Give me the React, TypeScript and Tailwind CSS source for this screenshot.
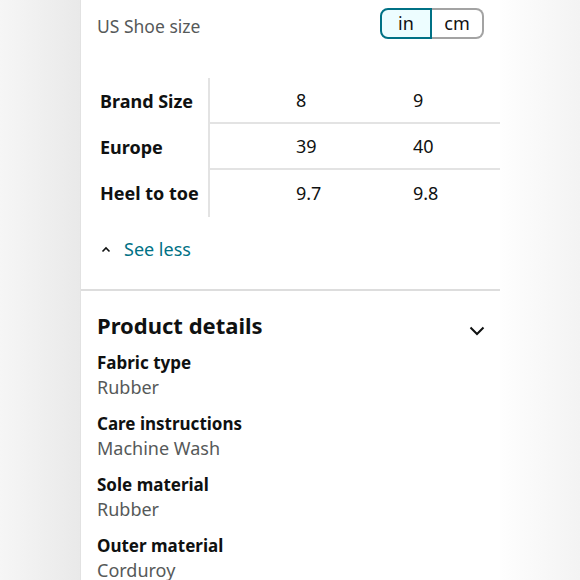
import React from 'react';

const sizeRows = [
  { label: 'Brand Size', a: '8', b: '9' },
  { label: 'Europe', a: '39', b: '40' },
  { label: 'Heel to toe', a: '9.7', b: '9.8' },
];

const details = [
  { label: 'Fabric type', value: 'Rubber' },
  { label: 'Care instructions', value: 'Machine Wash' },
  { label: 'Sole material', value: 'Rubber' },
  { label: 'Outer material', value: 'Corduroy' },
];

export default function App() {
  return (
    <div
      className="flex w-[580px] h-[580px] overflow-hidden bg-white"
      style={{ fontFamily: '"Noto Sans", "Open Sans", sans-serif' }}
    >
      {/* Left gutter */}
      <div className="w-[81px] shrink-0 bg-gradient-to-r from-[#f6f6f6] to-[#e9e9e9] border-r border-[#e2e2e2]" />

      {/* Panel */}
      <div className="w-[419px] shrink-0 bg-white">
        {/* Unit header */}
        <div className="flex items-center justify-between pl-4 pr-4 pt-2 h-[47px]">
          <span className="text-[17.5px] text-[#565959] -mt-[2px]">US Shoe size</span>
          <div className="flex h-[31px] text-[18px] text-[#0f1111] self-start">
            <div className="w-[52px] flex items-center justify-center rounded-l-[8px] border-2 border-[#007185] bg-[#edfdff]">
              in
            </div>
            <div className="w-[52px] flex items-center justify-center rounded-r-[8px] border-2 border-l-0 border-[#a3a3a3] bg-white">
              cm
            </div>
          </div>
        </div>

        {/* Size table */}
        <div className="ml-4 mt-[31px] flex">
          <div className="w-[113px] border-r-2 border-[#e3e3e3]">
            {sizeRows.map((r, i) => (
              <div
                key={r.label}
                className={`${i === 2 ? 'h-[47px]' : 'h-[46px]'} flex items-center pl-[3px] text-[18px] font-bold text-[#0f1111]`}
              >
                {r.label}
              </div>
            ))}
          </div>
          <div className="flex-1">
            {sizeRows.map((r, i) => (
              <div
                key={r.label}
                className={`${i === 2 ? 'h-[47px]' : 'h-[46px] border-b-2 border-[#e3e3e3]'} flex items-center text-[18px] text-[#0f1111]`}
              >
                <span className="w-[203px] pl-[86px]">{r.a}</span>
                <span>{r.b}</span>
              </div>
            ))}
          </div>
        </div>

        {/* See less */}
        <div className="flex items-center pl-[20px] mt-[18px] h-[28px] gap-[13px]">
          <svg width="10" height="7" viewBox="0 0 10 7" className="mt-[1px]">
            <path d="M1.5 5.5 L5 2 L8.5 5.5" fill="none" stroke="#0f1111" strokeWidth="1.6" />
          </svg>
          <span className="text-[18px] text-[#007185]">See less</span>
        </div>

        <div className="mt-[26px] border-t-2 border-[#dddddd]" />

        {/* Product details */}
        <div className="flex items-center justify-between pl-4 pr-4 mt-[19px] h-[30px]">
          <span className="text-[22px] font-bold text-[#0f1111]">Product details</span>
          <svg width="16" height="10" viewBox="0 0 16 10" className="mt-[12px] -mr-[1px]">
            <path d="M1.5 1.5 L8 8 L14.5 1.5" fill="none" stroke="#0f1111" strokeWidth="2" />
          </svg>
        </div>

        <div className="pl-4 mt-[10px] flex flex-col gap-[11px]">
          {details.map((d) => (
            <div key={d.label} className="flex flex-col">
              <span className="text-[17px] leading-[25px] font-bold text-[#0f1111]">{d.label}</span>
              <span className="text-[18px] leading-[25px] text-[#565959]">{d.value}</span>
            </div>
          ))}
        </div>
      </div>

      {/* Right gutter */}
      <div className="flex-1 bg-gradient-to-r from-[#fefefe] to-[#f3f3f3]" />
    </div>
  );
}
